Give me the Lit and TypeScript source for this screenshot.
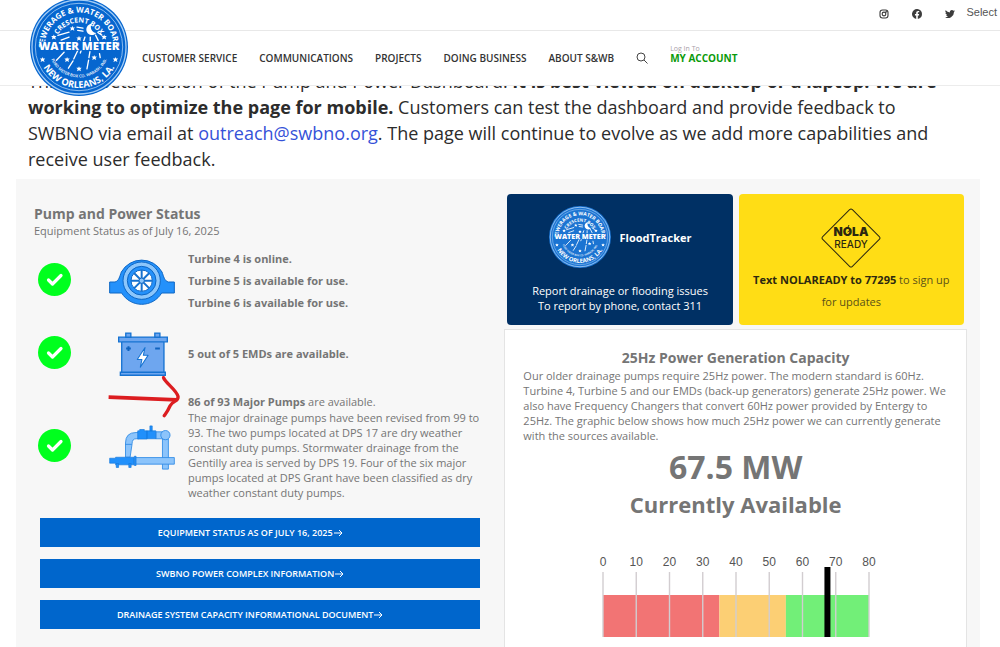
import { LitElement, html, css, svg } from "lit";
import { customElement, property } from "lit/decorators.js";

@customElement("swb-seal")
class SwbSeal extends LitElement {
  @property() tone = "#0666cf";

  static styles = css`
    :host { display: block; }
    svg { display: block; width: 100%; height: 100%; overflow: visible; }
    text { font-family: "Open Sans", sans-serif; font-weight: 800; fill: #fff; text-anchor: middle; }
    .outer { font-size: 24px; font-weight: 700; }
    .low { font-size: 28px; font-weight: 700; }
    .inner { font-size: 21px; font-weight: 700; }
    .tiny { font-size: 12px; font-weight: 600; }
    .band { font-size: 34px; }
  `;

  render() {
    return html`<svg viewBox="0 0 296 296" role="img" aria-label="Sewerage and Water Board of New Orleans">
      <defs>
        <path id="top" d="M148 252a104 104 0 0 1 0-208a104 104 0 0 1 0 208" />
        <path id="in" d="M148 222a74 74 0 0 1 0-148a74 74 0 0 1 0 148" />
        <path id="low" d="M24 148a124 124 0 0 0 248 0" />
        <path id="small" d="M56 148a92 92 0 0 0 184 0" />
      </defs>
      <circle cx="148" cy="148" r="148" fill=${this.tone} />
      <circle cx="148" cy="148" r="142" fill="none" stroke="#a5cdf5" stroke-width="4" />
      <circle cx="148" cy="148" r="132" fill="none" stroke="#a5cdf5" stroke-width="2.5" />
      <text class="outer"><textPath href="#top" startOffset="50%">SEWERAGE &amp; WATER BOARD</textPath></text>
      <text class="inner"><textPath href="#in" startOffset="50%">CRESCENT BOX</textPath></text>
      <text class="low"><textPath href="#low" startOffset="50%">NEW ORLEANS, LA.</textPath></text>
      <text class="tiny"><textPath href="#small" startOffset="50%">FORD METER BOX CO. WABASH, IND.</textPath></text>
      <g stroke="#fff" stroke-width="4" stroke-linecap="round" fill="none">
        <path d="M84 113l34-10M94 127l24-9M142 88l18 3M144 98l16 2M166 118l-4 12M182 118v12M198 112l8 16M205 104l12 8" />
        <path d="M80 188l23-24M116 212l14-22M132 184l13-27M172 214l5-26M178 180l3-18M210 168l2 12M152 166l4-12" />
      </g>
      <path d="M186 78a17 17 0 1 0 14 28a19 19 0 0 1-14-28z" fill="#fff" />
      <g fill="#fff">
        ${[[128, 92], [148, 122], [72, 118], [224, 118], [112, 186], [194, 180], [148, 214], [38, 186], [258, 186]].map(
          ([x, y]) => svg`<path transform="translate(${x} ${y})" d="M0-8l2 5 6 0-4 4 2 6-6-3-6 3 2-6-4-4 6 0z" />`
        )}
      </g>
      <rect x="30" y="131" width="236" height="28" fill=${this.tone} />
      <text class="band" x="148" y="157">WATER METER</text>
    </svg>`;
  }
}

@customElement("capacity-gauge")
class CapacityGauge extends LitElement {
  @property({ type: Number }) value = 67.5;

  static styles = css`
    :host { display: block; }
    svg { display: block; margin: 0 auto; }
    text { font: 12px "Liberation Sans", Arial, sans-serif; fill: #555; text-anchor: middle; }
  `;

  render() {
    const x = (v: number) => 12 + (v * 266) / 80;
    const ticks = [0, 10, 20, 30, 40, 50, 60, 70, 80];
    const zones: [number, number, string][] = [
      [0, 35, "#f27474"],
      [35, 55, "#fccf74"],
      [55, 80, "#72ef78"],
    ];
    return html`<svg width="290" height="84" viewBox="0 0 290 84" role="img" aria-label="${this.value} MW of 80 MW">
      ${zones.map(([a, b, c]) => svg`<rect x=${x(a)} y="42" width=${x(b) - x(a)} height="42" fill=${c} />`)}
      ${ticks.map(
        (t) => svg`<path d="M${x(t)} 19V84" stroke="#d2cdd0" stroke-width="1.4" />
          <text x=${x(t)} y="13">${t}</text>`
      )}
      <rect x=${x(this.value) - 3} y="14" width="6" height="70" fill="#000" />
    </svg>`;
  }
}

const check = html`<svg class="check" width="33" height="33" viewBox="0 0 33 33" role="img" aria-label="OK">
  <circle cx="16.500" cy="16.500" r="16.500" fill="#00ff1e" />
  <path d="M10.500 17l4 4 8.500-8.500" fill="none" stroke="#fff" stroke-width="3.200" stroke-linecap="round" stroke-linejoin="round" />
</svg>`;

const turbine = html`<svg width="66" height="48" viewBox="0 0 198 144" role="img" aria-label="Turbine">
  <g stroke="#0d66c4" stroke-width="3">
    <path d="M2 75H18C30 72 32 58 37 45A70 70 0 0 1 159 45C164 58 166 72 178 75H196V108H158A70 70 0 0 1 38 108H2Z" fill="#2491fb" />
    <circle cx="98" cy="71" r="56" fill="#8cc6fb" />
    <circle cx="98" cy="71" r="43" fill="#2491fb" />
    <circle cx="98" cy="71" r="32" fill="#fff" />
  </g>
  <g stroke="#1772cf" stroke-width="6">
    <path d="M98 39V103M66 71H130M75 48L121 94M121 48L75 94" />
  </g>
  <circle cx="98" cy="71" r="8" fill="#8cc6fb" stroke="#0d66c4" stroke-width="3" />
</svg>`;

const battery = html`<svg width="50" height="44" viewBox="0 0 148 130" role="img" aria-label="Battery">
  <g fill="#6ea6ef" stroke="#1673d2" stroke-width="4">
    <path d="M23 3h15v13H23zM109 3h15v13h-15zM11 29h125v90H11zM2 15h144v14H2zM7 119h133v9H7z" />
  </g>
  <path d="M24 49h14M31 42v14M110 49h14" stroke="#1063bf" stroke-width="6" />
  <path d="M80 46L57 81H71L66 104L89 69H75Z" fill="#fff" stroke="#1673d2" stroke-width="3" stroke-linejoin="round" />
</svg>`;

const pump = html`<svg width="66" height="45" viewBox="0 0 200 135" role="img" aria-label="Drainage pump">
  <g fill="#8cc4fb" stroke="#2a88e4" stroke-width="2.500">
    <path d="M162 42h18v91h-18z" />
    <path d="M80 98h118v20H80z" />
    <path d="M50 97V54Q50 22 82 22H90V41H82Q70 41 70 56L64 97Z" />
    <path d="M49 58H69M142 20h22v21h-22z" />
    <circle cx="171" cy="30" r="14" />
  </g>
  <g fill="#2190fb" stroke="#1678dc" stroke-width="2">
    <path d="M2 100H20V97H76V120H20V115H2Z" />
    <path d="M22 116h7v12h-7zM60 116h7v12h-7zM77 94h5v28h-5z" />
    <path d="M87 17h6v-4h14v4h8v25H87zM115 17h27v24h-27zM124 2h7v15h-7z" />
  </g>
</svg>`;

const arrow = html`<svg class="go" width="9" height="8" viewBox="0 0 9 8" aria-hidden="true">
  <path d="M0 4H8M5 1L8 4L5 7" fill="none" stroke="currentColor" />
</svg>`;

@customElement("app-root")
class AppRoot extends LitElement {
  static styles = css`
    :host {
      display: block;
      position: relative;
      height: 100vh;
      overflow: hidden;
      background: #fff;
      font-family: "Open Sans", "Noto Sans", sans-serif;
      font-size: 11px;
      line-height: 15px;
      color: #757575;
    }
    * { box-sizing: border-box; }
    h1, h2, p { margin: 0; }
    a { color: inherit; text-decoration: none; }
    svg { display: block; }

    .header {
      position: absolute;
      top: 0; left: 0; right: 0;
      z-index: 2;
      background: #fff;
      border-bottom: 1px solid #ececec;
    }
    .topbar {
      display: flex;
      justify-content: flex-end;
      align-items: center;
      gap: 23px;
      height: 31px;
      padding: 0 3px 3px 0;
      border-bottom: 1px solid #e8e8e8;
      color: #3c3c3c;
    }
    .lang { margin-left: -12px; padding-bottom: 3px; font-family: "Liberation Sans", Arial, sans-serif; color: #555; }
    .nav {
      display: flex;
      align-items: center;
      gap: 22px;
      height: 54px;
      padding-left: 142px;
      font-size: 10px;
      font-weight: 600;
      color: #333;
      white-space: nowrap;
    }
    .search { border: 0; padding: 0; margin: 0; background: none; color: #444; }
    .account { display: block; color: #0a9a0a; font-weight: 700; line-height: 10px; padding-bottom: 8px; }
    .account small { display: block; height: 8px; line-height: 8px; font-size: 7px; font-weight: 400; color: #a9a0a9; }
    .logo { position: absolute; left: 30px; top: -2px; width: 98px; height: 98px; }

    .intro {
      padding: 68px 52px 7px 28px;
      font-size: 18px;
      line-height: 26px;
      font-weight: 500;
      color: #2c2c2c;
    }
    .intro a { color: #3552d8; }

    .dashboard {
      display: grid;
      grid-template-columns: 19fr 18fr;
      margin: 0 20px 0 16px;
      padding-right: 13px;
      padding-top: 15px;
      min-height: 100vh;
      background: #f7f7f7;
    }
    .status { padding: 11px 24px 0 18px; }
    h1, h2 { font-size: 14px; line-height: 18px; font-weight: 700; }
    .rows { display: grid; gap: 18px; padding-top: 10px; }
    .row {
      position: relative;
      display: grid;
      grid-template-columns: 70px 75px 1fr;
      align-items: center;
    }
    .check { margin: 0 0 3px 4px; }
    .pic { width: 75px; padding-left: 5px; }
    .pic.small { padding-left: 14px; }
    .lines { margin-left: 9px; font-weight: 700; line-height: 22px; }
    .note { margin-left: 9px; }
    .lead { line-height: 16px; }
    .mark { position: absolute; left: 73px; top: -19px; }
    .links { display: grid; gap: 12px; margin: 18px 0 0 6px; }
    .links a {
      display: flex;
      align-items: center;
      justify-content: center;
      gap: 1px;
      height: 29px;
      padding-right: 20px;
      background: #0066cc;
      color: #fff;
      font-size: 9px;
      font-weight: 600;
    }

    .cards { display: grid; grid-template-columns: 1fr 1fr; gap: 6px; padding: 0 3px; }
    .card { height: 131px; border-radius: 4px; text-align: center; }
    .flood { background: #003064; color: #fff; padding-top: 12px; }
    .brand { display: flex; align-items: center; justify-content: center; gap: 9px; height: 62px; margin-bottom: 15px; font-weight: 700; }
    .brand swb-seal { width: 62px; height: 62px; }
    .ready { background: #ffdd15; color: #5b5118; padding: 13px 10px 0; line-height: 22px; }
    .ready svg { margin: 0 auto; }
    .ready b { color: #2c2810; }
    .nola { font-family: Inter, sans-serif; fill: #2c2810; text-anchor: middle; }
    .power {
      margin-top: 4px;
      min-height: 330px;
      padding: 19px 18px 0;
      background: #fff;
      border: 1px solid #e4e4e4;
    }
    .power h1 { margin-bottom: 1px; }
    .power h1, .power .big, .power .sub { text-align: center; }
    .big { font-size: 32px; line-height: 44px; font-weight: 700; margin-top: 2px; }
    .sub { font-size: 22px; line-height: 30px; font-weight: 700; margin-bottom: 34px; }
  `;

  nav = ["Customer Service", "Communications", "Projects", "Doing Business", "About S&WB"];
  documents = [
    "EQUIPMENT STATUS AS OF JULY 16, 2025",
    "SWBNO POWER COMPLEX INFORMATION",
    "DRAINAGE SYSTEM CAPACITY INFORMATIONAL DOCUMENT",
  ];

  render() {
    return html`
      <header class="header">
        <div class="topbar">
          <a href="#" aria-label="Instagram"><svg width="10" height="10" viewBox="0 0 20 20" fill="none" stroke="currentColor" stroke-width="2.200">
            <rect x="2" y="2" width="16" height="16" rx="5" /><circle cx="10" cy="10" r="3.700" /><circle cx="14.600" cy="5.400" r=".6" />
          </svg></a>
          <a href="#" aria-label="Facebook"><svg width="10" height="10" viewBox="0 0 20 20">
            <path fill="currentColor" d="M20 10a10 10 0 1 0-11.600 9.900v-7H5.900V10h2.500V7.800c0-2.500 1.500-3.900 3.800-3.900 1.100 0 2.200.2 2.200.2v2.500h-1.200c-1.300 0-1.600.8-1.600 1.600V10h2.700l-.4 2.900h-2.300v7A10 10 0 0 0 20 10z" />
          </svg></a>
          <a href="#" aria-label="Twitter"><svg width="10" height="10" viewBox="0 0 24 24">
            <path fill="currentColor" d="M24 4.600a10 10 0 0 1-2.800.8 5 5 0 0 0 2.100-2.700 10 10 0 0 1-3.100 1.200 4.900 4.900 0 0 0-8.400 4.500A14 14 0 0 1 1.700 3.100a4.900 4.900 0 0 0 1.500 6.600 4.900 4.900 0 0 1-2.200-.6v.1a4.900 4.900 0 0 0 3.900 4.800 5 5 0 0 1-2.200.1 4.900 4.900 0 0 0 4.600 3.400A9.900 9.900 0 0 1 0 19.500 14 14 0 0 0 21.500 7.100 10 10 0 0 0 24 4.600z" />
          </svg></a>
          <a class="lang" href="#">Select</a>
        </div>
        <nav class="nav">
          ${this.nav.map((n) => html`<a href="#">${n.toUpperCase()}</a>`)}
          <button class="search" aria-label="Search"><svg width="12" height="12" viewBox="0 0 12 12" fill="none" stroke="currentColor">
            <circle cx="5" cy="5" r="4" /><path d="M8 8l3.500 3.500" />
          </svg></button>
          <a class="account" href="#"><small>Log In To</small>MY ACCOUNT</a>
        </nav>
        <swb-seal class="logo"></swb-seal>
      </header>

      <p class="intro">
        This is a beta version of the Pump and Power Dashboard.
        <b>It is best viewed on desktop or a laptop. We are working to optimize the page for mobile.</b>
        Customers can test the dashboard and provide feedback to SWBNO via email at
        <a href="mailto:outreach@swbno.org">outreach@swbno.org</a>. The page will continue to evolve as we add more
        capabilities and receive user feedback.
      </p>

      <main class="dashboard">
        <section class="status">
          <h1>Pump and Power Status</h1>
          <p>Equipment Status as of July 16, 2025</p>
          <div class="rows">
            <div class="row">
              ${check}
              <div class="pic">${turbine}</div>
              <div class="lines">
                <p>Turbine 4 is online.</p>
                <p>Turbine 5 is available for use.</p>
                <p>Turbine 6 is available for use.</p>
              </div>
            </div>
            <div class="row">
              ${check}
              <div class="pic small">${battery}</div>
              <div class="lines"><p>5 out of 5 EMDs are available.</p></div>
            </div>
            <div class="row">
              ${check}
              <div class="pic">${pump}</div>
              <div class="note">
                <p class="lead"><b>86 of 93 Major Pumps</b> are available.</p>
                <p>
                  The major drainage pumps have been revised from 99 to 93. The two pumps located at DPS 17 are dry
                  weather constant duty pumps. Stormwater drainage from the Gentilly area is served by DPS 19. Four of
                  the six major pumps located at DPS Grant have been classified as dry weather constant duty pumps.
                </p>
              </div>
              <svg class="mark" width="74" height="43" viewBox="260 165 222 130" fill="none" stroke="#dc1d20" aria-hidden="true">
                <path d="M264 232L470 240" stroke-width="11" />
                <path d="M430 173C436 190 468 208 474 230C476 246 458 242 450 258C442 276 438 280 432 288" stroke-width="10" stroke-linecap="round" />
              </svg>
            </div>
          </div>
          <div class="links">${this.documents.map((d) => html`<a href="#">${d}${arrow}</a>`)}</div>
        </section>

        <section>
          <div class="cards">
            <div class="card flood">
              <div class="brand"><swb-seal tone="#1b74d2"></swb-seal><span>FloodTracker</span></div>
              <p>Report drainage or flooding issues</p>
              <p>To report by phone, contact 311</p>
            </div>
            <div class="card ready">
              <svg width="62" height="62" viewBox="0 0 62 62" role="img" aria-label="NOLA Ready">
                <rect x="10" y="10" width="42" height="42" rx="2" transform="rotate(45 31 31)" fill="none" stroke="#2c2810" />
                <text class="nola" x="31" y="29" font-size="12" font-weight="900">NOLA</text>
                <path d="M29 18l-2 4M27.500 25l3-2" stroke="#2c2810" />
                <text class="nola" x="31" y="41" font-size="10" font-weight="500">READY</text>
              </svg>
              <p><b>Text NOLAREADY to 77295</b> to sign up for updates</p>
            </div>
          </div>
          <div class="power">
            <h1>25Hz Power Generation Capacity</h1>
            <p>
              Our older drainage pumps require 25Hz power. The modern standard is 60Hz. Turbine 4, Turbine 5 and our
              EMDs (back-up generators) generate 25Hz power. We also have Frequency Changers that convert 60Hz power
              provided by Entergy to 25Hz. The graphic below shows how much 25Hz power we can currently generate with
              the sources available.
            </p>
            <p class="big">67.5 MW</p>
            <p class="sub">Currently Available</p>
            <capacity-gauge value="67.5"></capacity-gauge>
          </div>
        </section>
      </main>
    `;
  }
}
